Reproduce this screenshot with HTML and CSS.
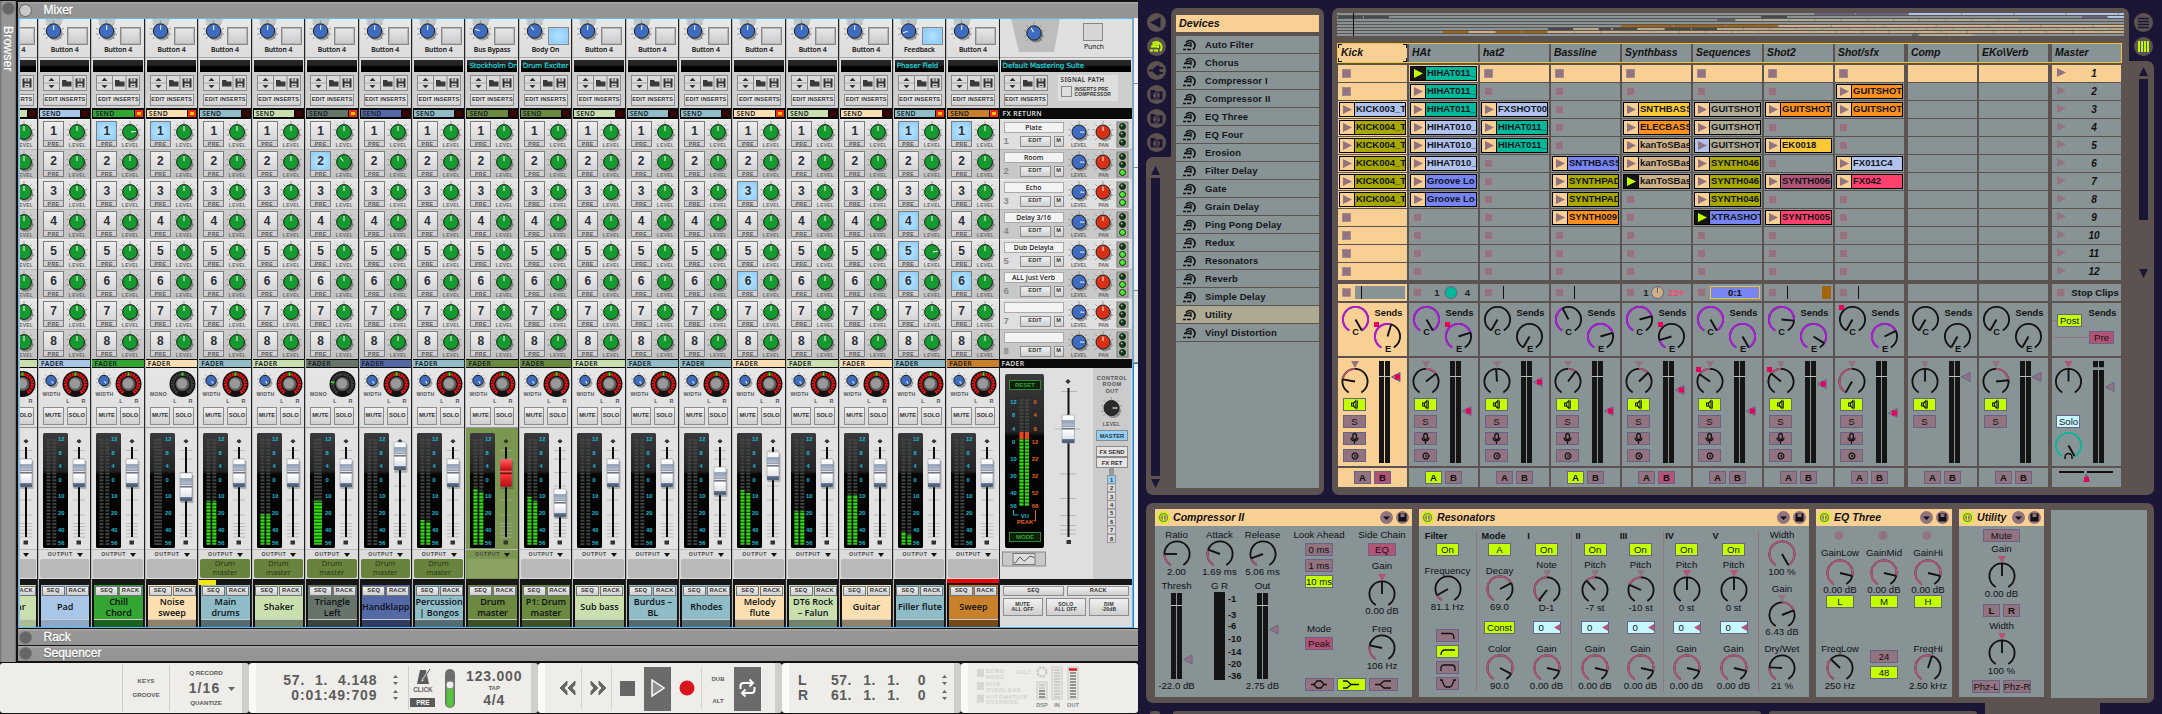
FILE: index.html
```html
<!DOCTYPE html>
<html lang="en">
<head>
<meta charset="utf-8">
<title>Mixer and session</title>
<link rel="stylesheet" href="styles.css">
</head>
<body>
<svg class="defs" width="0" height="0">
  <defs>
    <linearGradient id="cap" x1="0" y1="0" x2="0" y2="1">
      <stop offset="0" stop-color="#fff"/><stop offset=".18" stop-color="#f4f5f8"/><stop offset=".2" stop-color="#8f9db4"/><stop offset=".38" stop-color="#b5bdcc"/><stop offset=".4" stop-color="#7e8a9e"/><stop offset=".46" stop-color="#fff"/><stop offset=".49" stop-color="#3c4656"/><stop offset=".54" stop-color="#fff"/><stop offset=".84" stop-color="#dfe2e8"/><stop offset=".88" stop-color="#5d6e89"/><stop offset="1" stop-color="#44526a"/>
    </linearGradient>
    <linearGradient id="capred" x1="0" y1="0" x2="0" y2="1">
      <stop offset="0" stop-color="#f66"/><stop offset=".2" stop-color="#e33"/><stop offset=".4" stop-color="#b11"/><stop offset=".46" stop-color="#f77"/><stop offset=".5" stop-color="#300"/><stop offset=".56" stop-color="#f33"/><stop offset="1" stop-color="#a11"/>
    </linearGradient>
    <linearGradient id="glass" x1="0" y1="0" x2="0" y2="1">
      <stop offset="0" stop-color="#3a3a3c"/><stop offset=".33" stop-color="#232325"/><stop offset=".36" stop-color="#060606"/><stop offset="1" stop-color="#000"/>
    </linearGradient>
    <pattern id="led" width="10" height="3.36" patternUnits="userSpaceOnUse"><rect width="10" height="2.3" fill="#35dc12"/><rect y="2.3" width="10" height="1.1" fill="#0b5b05"/></pattern>
    <pattern id="off" width="10" height="3.36" patternUnits="userSpaceOnUse"><rect width="10" height="2" fill="#414640"/></pattern>
    <g id="ticks" stroke="#8b8b8b" stroke-width=".8"><path d="M0-11V-8M-7.7-7.7-6-6M7.7-7.7 6-6M-10.5-2.5-8-2M10.5-2.5 8-2M-10.5 3.5-8 2.8M10.5 3.5 8 2.8M-8 8-6 6M8 8 6 6"/></g>
    <g id="floppy"><path d="M0 0H9V9H0Z" fill="#333"/><path d="M2 0H7V3H2ZM2 5H7V9H2Z" fill="#d5d5d5"/><path d="M4.500 0V3M3 7H6" stroke="#333"/></g>
    <g id="device" fill="none" stroke="#111" stroke-width="1.600"><path d="M3 3.500A5 5 0 1 1 10 10.500"/><path d="M1 6.500H8M0 10.500H3M4 10.500H8" stroke-width="1.500"/><path d="M2 6.500Q4 3.500 8 4V8" stroke-width="1.300"/></g>
  </defs>
</svg>
<main class="desk">
  <section class="reason">
    <aside class="browser"><i class="dot"></i><span>Browser</span></aside>
    <div class="rack">
      <header class="bar top"><i class="dot light"></i>Mixer</header>
      <div class="mixrow"><div class="mixer" id="mixer"></div><div class="sliver"><i></i><i></i><i></i><i></i><b></b></div></div>
      <header class="bar"><i class="dot"></i>Rack</header>
      <header class="bar last"><i class="dot"></i>Sequencer</header>
    </div>
    <footer class="transport" id="transport"></footer>
  </section>
  <section class="live">
    <div class="upper">
      <nav class="tools" id="tools"></nav>
      <div class="panel devices"><h2>Devices</h2><ul id="devlist"></ul></div>
      <div class="panel session"><div id="overview"></div><div class="heads" id="heads"></div><div class="tracks" id="tracks"></div></div>
      <nav class="side" id="side"></nav>
    </div>
    <div class="panel chain" id="chain"></div>
    <div class="under"><i class="u0"></i><i class="u1"></i><i class="u2"></i><i class="u3"></i></div>
  </section>
</main>
<script src="app.js"></script>
</body>
</html>
```

FILE: styles.css
```css
* { box-sizing: border-box; }
body { margin: 0; width: 2162px; height: 714px; overflow: hidden; background: #1b1636; font-family: "Liberation Sans", Arial, sans-serif; }
svg { display: block; flex: none; overflow: visible; }
.defs { position: absolute; }
.desk { display: flex; width: 2162px; height: 714px; }

/* ---------- mixer ---------- */
.reason { width: 1138px; height: 714px; display: grid; grid-template-columns: 18px 1120px; grid-template-rows: 663px 51px; background: #111; overflow: hidden; }
.browser { width: 16px; height: 661px; margin-top: 1px; background: linear-gradient(90deg, #777 1px, #969696 2px, #969696 14px, #777); display: flex; flex-direction: column; align-items: center; gap: 11px; padding-top: 1px; }
.browser span { writing-mode: vertical-rl; color: #fff; font-size: 12.4px; line-height: 16px; text-shadow: 0 0 1px #555; -webkit-text-stroke: .3px #fff; }
.dot { display: block; flex: none; width: 13px; height: 13px; border-radius: 50%; background: #666; border: 1px solid #777; }
.dot.light { background: #c9c9c9; border-color: #666; }
.rack { height: 663px; }
.bar { height: 16px; margin-bottom: 1px; background: linear-gradient(#a9a9a9 1px, #969696 2px, #949494); color: #fff; font-size: 12px; line-height: 15px; display: flex; align-items: center; gap: 11px; padding-left: 1px; text-shadow: 0 1px 1px #555; -webkit-text-stroke: .3px #fff; }
.bar { gap: 11.500px; }
.bar.top { margin: 2px 0 0; height: 16px; }
.bar.last { margin: 0; height: 15px; }
.mixrow { display: flex; height: 611px; }
.mixer { width: 1115px; height: 610px; border: 1px solid #64b5ee; display: flex; background: #222; overflow: hidden; }
.sliver { width: 5px; height: 610px; background: #f2f2f5; display: flex; flex-direction: column; }
.sliver i { height: 84px; border-bottom: 1px solid #888; border-left: 1px solid #999; flex: 0 0 auto; }
.sliver i:nth-child(1) { height: 66px; }
.sliver i:nth-child(3) { height: 123px; }
.sliver i:nth-child(4) { height: 72px; background: #e2e2e2; }
.sliver b { flex: 1; border-left: 1px solid #2a82d8; border-top: 1px solid #2a82d8; }

.chan { width: 53.43px; flex: none; height: 608px; background: #e0e0e0; border-right: 1.5px solid #222; border-left: 1px solid #b8b8b8; display: flex; flex-direction: column; font-size: 6px; color: #333; overflow: hidden; }
.chan.cut { width: 19px; align-items: flex-end; }
.chan.cut > * { width: 51px; flex-shrink: 0; }
.insert { height: 39px; background: linear-gradient(#e8e8e8, #dcdcdc); border-bottom: 1px solid #aaa; }
.insert .r { display: flex; height: 26px; padding-left: 2px; gap: 1px; }
.sq { width: 21px; height: 18px; border: 1px solid #888; background: linear-gradient(#e8e8e8, #c9c9cc); margin: 8px 0 0 1px; box-shadow: inset 0 0 0 1px #b7b7b7; }
.sq.on { background: radial-gradient(#b4e3ff, #84c5f6); box-shadow: inset 0 0 0 1px #9ad2fa; }
.insert p { margin: 0; text-align: center; font: 500 6.8px/9px "Noto Sans", sans-serif; color: #111; -webkit-text-stroke: .15px #111; white-space: nowrap; }
.display { margin: 2px 1px 0; height: 12px; background: linear-gradient(#29292b, #222224 45%, #060606 50%, #000); color: #25d3d8; font: 7.1px/12px "DejaVu Sans", sans-serif; white-space: nowrap; overflow: hidden; padding-left: 2px; letter-spacing: -.1px; -webkit-text-stroke: .2px #25d3d8; }
.patch { height: 36px; background: linear-gradient(#cbcbcb, #d2d2d2); padding: 3px 0 0 4px; }
.patch .g { display: flex; }
.g { display: flex; height: 16px; width: 44px; border: 1px solid #8a8a8a; background: #dadada; }
.edit { width: 44px; height: 12px; margin-top: 3px; }
.btn { border: 1px solid #8d8d8d; background: linear-gradient(#f1f1f1, #cfcfcf); color: #333; font: 700 5.6px/1 "Liberation Sans", sans-serif; display: flex; align-items: center; justify-content: center; text-align: center; letter-spacing: .2px; white-space: nowrap; }
.btn.on { background: #8fd0fb; }
.band { height: 11px; background: #0a0a0a; display: flex; align-items: center; padding: 1px 1px; }
.band span { flex: 1; height: 7.5px; font: 600 6.8px/7.5px "Noto Sans", sans-serif; color: #15202a; padding-left: 2px; letter-spacing: .3px; }
.band i { width: 8px; height: 7px; background: #3c0505; margin-left: 1px; border: 1px solid #260202; }
.band i.lit { background: #ffc400; border: 2px solid #f22e10; }
.band.f { height: 9px; padding: 0; }
.band.f span { height: 7px; line-height: 7px; }
.sends { height: 240px; display: flex; flex-direction: column; }
.send { flex: 1; background: linear-gradient(#e6e6e6, #d9d9d9); display: flex; border-top: 1px solid #f2f2f2; padding-left: 3px; }
.send:nth-child(even) { background: linear-gradient(#cdcdcd, #c2c2c2); border-top-color: #b5b5b5; }
.num { width: 21px; height: 26px; margin: 1px 3px 0 1px; border: 1px solid #7d7d7d; background: linear-gradient(#efefef, #cdcdd1); display: flex; flex-direction: column; text-align: center; }
.num b { font: 700 12px/18px "Liberation Sans", sans-serif; color: #2c2f33; height: 18px; }
.num.on b { background: radial-gradient(#bfe7ff, #8acbf9); }
.num small { font: 700 5.2px/6px "Liberation Sans", sans-serif; border-top: 1px solid #909090; color: #555; letter-spacing: .4px; }
.pan { height: 60px; display: flex; flex-direction: column; background: linear-gradient(#e6e6e6, #dedede); border-bottom: 1px solid #999; }
.ms { display: flex; gap: 3px; padding: 1px 0 0 4px; }
.ms .btn { width: 20.5px; height: 18px; font-size: 5.8px; letter-spacing: 0; }
.strip { height: 122px; border-bottom: 1px solid #bbb; background: #e2e2e2; padding-top: 1px; }
.bus .strip, .bus .out { background: #7b9650; }
.out { height: 29px; background: #dcdcdc; padding: 0 1px; }
.out p { margin: 0; height: 9px; display: flex; align-items: center; justify-content: center; gap: 4px; font: 700 5.2px/9px "Liberation Sans", sans-serif; letter-spacing: .6px; color: #444; padding-left: 1px; }
.out div { height: 19px; border-radius: 2px; background: #b9b9b9; text-align: center; font: 7.6px/9px "Open Sans", sans-serif; color: #27340f; white-space: pre; }
.bus .out div { background: #8ba362; }
.out div.to { background: #68833e; }
.flag { height: 6px; flex: none; background: #161616; border-top: 2px solid #161616; }
.flag.y { background: linear-gradient(90deg, #f7e70f 17px, #161616 17px); border-top-width: 1px; }
.flag.r { height: 6px; background: #e60303; border-color: #e60303; border-bottom: 2px solid #161616; }
.name { flex: 1; display: flex; flex-direction: column; border-left: 2px solid #111; border-right: 1px solid #111; color: #0b1013; }
.name .sr { display: flex; justify-content: center; gap: 1px; padding-top: 1px; }
.name .btn { width: 23px; height: 10px; border-color: #6f7578; font-size: 5.8px; }
.name p { margin: 0; height: 23px; display: flex; align-items: center; justify-content: center; text-align: center; font: 600 9px/10.5px "Open Sans", sans-serif; white-space: pre; }
.name i { flex: 1; border-top: 1.5px solid #c9cdcd; background: rgba(0, 0, 0, .42); }
.chan.first .name i, .chan.cut .name i { background: rgba(0, 0, 0, .15); }

.master { flex: 1; display: flex; flex-direction: column; background: #e0e0e0; color: #333; }
.minsert { height: 39px; background: #e0e0e0; border-bottom: 1px solid #aaa; }
.mpatch { height: 36px; display: flex; background: #cecece; padding: 3px 0 0 4px; gap: 10px; }
.sig { width: 60px; height: 26px; background: #dedede; font: 600 6.2px/8px "Noto Sans", sans-serif; padding: 1px 3px; letter-spacing: .4px; white-space: nowrap; }
.sig div { display: flex; gap: 3px; font: 700 4.9px/5px "Liberation Sans", sans-serif; margin-top: 3px; letter-spacing: .1px; }
.sig i { width: 11px; height: 11px; border: 1px solid #888; margin-top: -1px; flex: none; }
.fx { flex: 1; display: flex; background: #dfdfdf; border-top: 1px solid #eee; padding-left: 4px; }
.fx:nth-child(even) { background: #c8c8c8; border-top-color: #b5b5b5; }
.fxn { width: 60px; margin-top: 2px; }
.fxn p { margin: 0; height: 11px; border: 1px solid #aaa; background: #f3f3f3; text-align: center; font: 500 6.9px/9px "Noto Sans", sans-serif; color: #111; }
.fxn div { display: flex; gap: 3px; align-items: center; margin-top: 2px; }
.fxn b { width: 13px; font: 700 9.5px/12px "Liberation Sans", sans-serif; color: #888; }
.fxn .e { width: 31px; height: 11px; }
.fxn .m { width: 10px; height: 11px; }
.desktrack { background: #dfdfdf; padding-top: 1px; }
.mbot { flex: 1; background: #dcdcdc; padding: 1px 3px; }
.mbot div { display: flex; gap: 3px; margin-bottom: 2px; }
.mbot .btn { flex: 1; height: 10px; line-height: 5.2px; white-space: pre; }
.mbot .big .btn { height: 18px; font-size: 5px; }

/* ---------- transport ---------- */
.transport { grid-column: 1 / 3; height: 51px; background: #111; display: flex; color: #5c5c5c; }
.tp { background: #eeede9; height: 50px; display: flex; align-items: center; border-radius: 3px; border-right: 7px solid #cfcfcc; border-left: 7px solid #fafaf8; flex: none; }
.tp.t1 { width: 249px; border-left: 0; padding-left: 122px; }
.tp.t2 { width: 289px; }
.tp.t3 { width: 244px; }
.tp.t4 { width: 179px; }
.tp.t5 { width: 177px; border-right: 0; }
.cell { display: flex; flex-direction: column; align-items: center; justify-content: space-evenly; height: 46px; font: 700 6.2px/8px "Liberation Sans", sans-serif; border-left: 1px solid #ccc; flex: none; }
.cell.k { width: 47px; padding: 5px 0; }
.cell.q { width: 73px; border-right: 0; }
.cell.q b, .tempo b { font: 700 14px/15px "Liberation Sans", sans-serif; letter-spacing: .8px; white-space: nowrap; }
.cell.q b { letter-spacing: 1.1px; padding-left: 12px; }
.pos { width: 104px; height: 30px; text-align: right; font: 700 14px/15px "Liberation Sans", sans-serif; white-space: pre; margin-left: 17px; letter-spacing: .9px; display: flex; flex-direction: column; align-items: flex-end; }
.pos span { margin-right: -1px; }
.arr { margin-left: 15px; }
.click { display: flex; flex-direction: column; align-items: center; font: 700 6.4px/8px "Liberation Sans", sans-serif; width: 30px; margin-left: 9px; height: 44px; border-left: 1px solid #ccc; }
.click b { background: #5a5a5a; color: #fff; width: 25px; text-align: center; margin-top: 4px; line-height: 9px; }
.tempo { width: 74px; display: flex; flex-direction: column; align-items: center; font: 700 6px/9px "Liberation Sans", sans-serif; }
.loc { display: grid; grid-template-columns: 26px 28px 24px 24px 26px; text-align: right; font: 700 14px/15px "Liberation Sans", sans-serif; margin-left: 9px; letter-spacing: .5px; }
.loc span:nth-child(5n + 1) { text-align: left; }

/* ---------- session ---------- */
.live { width: 1024px; height: 714px; color: #111; }
.panel { background: #5c5350; border-radius: 7px; }
.upper { display: flex; height: 495px; padding-top: 8px; padding-left: 8px; }
.tools { width: 25px; height: 487px; display: flex; flex-direction: column; flex: none; }
.circles { height: 149px; padding: 5px 0 0 1px; display: flex; flex-direction: column; gap: 5px; background: #1b1636; }
.scroll { flex: 1; background: #5c5350; border-radius: 7px 0 0 7px; padding: 9px 0 7px 4px; display: flex; flex-direction: column; align-items: center; padding-right: 10px; gap: 3px; }
.scroll i { width: 9px; flex: 1; background: #1b1636; }
.devices { width: 153px; padding: 7px 5px 7px 5px; height: 487px; flex: none; border-bottom-left-radius: 0; }
.devices h2 { margin: 0 0 4px; height: 17px; background: #f9d093; font: italic 700 10.8px/16px "Liberation Sans", sans-serif; padding-left: 3px; }
.devices ul { margin: 0; padding: 0; list-style: none; background: #879394; height: 452px; }
.devices li { height: 18px; border-bottom: 1px solid #5c5350; display: flex; align-items: center; gap: 8px; padding-left: 7px; font: 700 9.5px/17px "Liberation Sans", sans-serif; letter-spacing: .12px; color: #15151c; }
.devices li.sel { background: #aea993; }
.session { width: 797px; height: 487px; margin-left: 8px; padding: 5px 5px 0; flex: none; border-bottom-right-radius: 0; }
.heads { margin-top: 7px; width: 785px; height: 20px; border: 1px solid #fbc52f; display: flex; background: #5c5350; }
.heads span { width: 69px; margin-right: 2px; background: #879394; font: italic 700 10.4px/17px "Liberation Sans", sans-serif; padding-left: 3px; flex: none; }
.heads span.g, .col.g { margin-right: 4px; }
.heads .sel { background: linear-gradient(90deg, #111 4px, transparent 4px 65px, #111 65px) 0 0/69px 1px no-repeat, linear-gradient(90deg, #111 4px, transparent 4px 65px, #111 65px) 0 100%/69px 1px no-repeat, linear-gradient(#111 4px, transparent 4px 14px, #111 14px) 0 0/1px 18px no-repeat, linear-gradient(#111 4px, transparent 4px 14px, #111 14px) 100% 0/1px 18px no-repeat, #f9d093; }
.heads span:last-child { margin-right: 0; }
.tracks { display: flex; margin: 2px 0 0 1px; }
.col { width: 69px; margin-right: 2px; flex: none; }
.slot { height: 17px; margin-bottom: 1px; background: #879394; padding: 1px; display: flex; }
.slot.lit, .col.sel > div { background-color: #f9d093; }
.stop { width: 9px; height: 9px; background: #927380; margin: 3px 0 0 3px; border: .5px solid #a08a90; flex: none; }
.clip { flex: 1; min-width: 0; border: 1px solid #000; display: flex; height: 15px; margin: 0; }
.clip u { width: 15px; background: #f9d093; border-right: 1px solid #000; flex: none; padding: 2px 0 0 3px; }
.clip.play u { background: #151515; }
.clip.alt u { background: #b1c3ec; }
.clip span { flex: 1; overflow: hidden; white-space: nowrap; font: 700 9.5px/12px "Liberation Sans", sans-serif; padding-left: 1px; color: #10151c; }
.c-teal { background: #00b99b; }
.c-sky { background: #b1c3ec; }
.c-olive { background: #a8a800; }
.c-blue { background: #7784f2; }
.c-orange { background: #ff8f1f; }
.c-yellow { background: #fcc835; }
.c-tan { background: #cfb086; }
.c-gray { background: #b0ab95; }
.c-plum { background: #b35476; }
.c-red { background: #ff416d; }
.scene { padding: 3px 0 0 5px; font: italic 700 10px/11px "Liberation Sans", sans-serif; }
.scene span { width: 56px; text-align: center; }
.status { height: 17px; margin: 4px 0 2px; background: #879394; padding: 1px; display: flex; font: 700 9.6px/15px "Liberation Sans", sans-serif; }
.sendbox { height: 53px; margin-bottom: 2px; background: #879394; }
.mix { height: 108px; margin-bottom: 2px; background: #879394; display: flex; }
.mix .l { width: 33px; padding-left: 5px; display: flex; flex-direction: column; gap: 4px; }
.pb { border: 1px solid #6a6186; background: #927380; color: #111; font: 9.6px/11px "Liberation Sans", sans-serif; display: flex; align-items: center; justify-content: center; white-space: nowrap; flex: none; }
.pb.lime { background: #c4ff00; }
.pb.p { background: #b35476; }
.pb.w { background: #c6f8ff; justify-content: space-between; padding-left: 5px; }
.mix .pb { width: 23px; height: 13px; }
.ab { height: 19px; background: #879394; display: flex; gap: 3px; padding: 3px 0 0 16px; }
.ab.x { padding: 0; }
.ab .pb { width: 17px; height: 13px; font-weight: 700; }
.side { width: 25px; display: flex; flex-direction: column; flex: none; }
.side .two { height: 53px; padding: 5px 0 0 5px; display: flex; flex-direction: column; gap: 5px; }
.side .sc { flex: 1; background: #5c5350; border-radius: 0 7px 7px 0; display: flex; flex-direction: column; padding: 6px 0 0 10px; gap: 3px; align-items: flex-start; }
.side .sc i { width: 9px; height: 141px; background: #1b1636; }
.side .sc svg + i + svg { margin-top: 46px; }

/* ---------- device chain ---------- */
.chain { margin: 8px 0 0 8px; width: 1008px; height: 200px; padding: 6px 0 0 9px; display: flex; gap: 7px; }
.dev { height: 188px; background: #879394; flex: none; }
.dev header { height: 17px; background: #f9d093; display: flex; align-items: center; gap: 3px; padding: 0 3px 0 2px; font: italic 700 10.6px/17px "Liberation Sans", sans-serif; }
.dev header span { flex: 1; white-space: nowrap; }
.dev .body { display: flex; }
.w1 { width: 257px; }
.w2 { width: 390px; }
.w3 { width: 136px; }
.w4 { width: 85px; }
.w3 .body { padding-left: 2px; }
.blank { width: 96px; height: 188px; margin-top: 1px; background: #879394; }
.stack { display: flex; flex-direction: column; align-items: center; flex: none; }
.stack > * { flex: none; }
.rule { width: 1px; height: 161px; margin-top: 5px; background: #927380; flex: none; }
.t { font: 9.7px/12px "Liberation Sans", sans-serif; height: 12px; white-space: nowrap; color: #10121a; display: flex; justify-content: center; width: 0; }
.t.b { font-weight: 700; font-size: 9.2px; }
.pair { display: flex; gap: 3px; }
.under { height: 11px; display: grid; grid-template-columns: 27px 588px 8px 208px 8px 115px; padding-left: 8px; }
.under i { background: #5c5350; height: 3px; margin-top: 8px; border-radius: 5px 5px 0 0; }
.under .u0 { width: 10px; margin-left: 4px; }
.under .u1 { grid-column: 2; }
.under .u2 { grid-column: 4; }
.under .u3 { grid-column: 6; margin-top: 0; height: 11px; border-radius: 0; }
```

FILE: app.js
```js
const $ = id => document.getElementById(id);
const svg = (w, h, s) => `<svg width="${w}" height="${h}" viewBox="0 0 ${w} ${h}">${s}</svg>`;
const txt = (x, y, s, size, fill = '#333', extra = '') => `<text x="${x}" y="${y}" font-size="${size}" fill="${fill}" text-anchor="middle" font-family="Liberation Sans, sans-serif" ${extra}>${s}</text>`;
const bold = 'font-weight="700"';

/* ---------- mixer ---------- */
const dial = (x, y, r, fill, a, tick = 1) => `<g transform="translate(${x} ${y})"><use href="#ticks" transform="scale(${tick})"/><circle cx="1.8" cy="2.4" r="${r}" fill="#000" opacity=".3"/><circle r="${r}" fill="${fill}" stroke="#1a1f1a" stroke-width="1"/><path d="M0-1V${-r + 1.5}" transform="rotate(${a})" stroke="#e8f5e8" stroke-width="1.1"/></g>`;

const BLUE = '#3f6cc0', GREEN = '#159a2f', RED = '#d92f17';
const sand = '#fbdfb0', teal = '#8fbcc6', lime = '#c9e0ae', moss = '#6b8a40';
const channels = [
  { n: 'Guitar', col: lime, cut: 1 },
  { n: 'Pad', col: '#a9c6e8', first: 1 },
  { n: 'Chill\nChord', col: '#33a532', on: [1], lv: { 1: 85 } },
  { n: 'Noise\nsweep', col: sand, on: [1], mono: 1, f: 472 },
  { n: 'Main\ndrums', col: teal, m: [500, 500], out: 1, flag: 'y' },
  { n: 'Shaker', col: lime, m: [513, 513], out: 1 },
  { n: 'Triangle\nLeft', col: '#66746a', on: [2], lv: { 2: -40 }, mono: 1, p: -80, m: [500, 500], out: 1 },
  { n: 'Handklapp', col: '#5568a6', f: 441, out: 1 },
  { n: 'Percussion\n| Bongos', col: teal, m: [519, 521], out: 1 },
  { n: 'Drum\nmaster', col: moss, lab: 'Bus Bypass', disp: 'Stockholm Dru', k: -72, m: [488, 491], bus: 1 },
  { n: 'P1: Drum\nmaster', col: moss, lab: 'Body On', disp: 'Drum Exciter', k: -38, btn: 1, m: [496, 500], f: 488 },
  { n: 'Sub bass', col: lime },
  { n: 'Burdus –\nBL', col: teal },
  { n: 'Rhodes', col: teal, f: 466 },
  { n: 'Melody\nflute', col: sand, on: [3, 6], m: [489, 492], f: 451 },
  { n: 'DT6 Rock\n– Falun', col: lime, m: [510, 510] },
  { n: 'Guitar', col: sand, m: [494, 494] },
  { n: 'Filler flute', col: teal, lab: 'Feedback', disp: 'Phaser Field', k: -108, btn: 1, on: [1, 4, 5, 6], lv: { 5: 82 }, m: [531, 534] },
  { n: 'Sweep', col: '#c9802a', on: [1, 6], flag: 'r' }
];

const panDial = c => {
  let s = '<circle r="13" fill="#121212"/>';
  for (let a = -144; a <= 144; a += 16) {
    const mid = a === 0 ? !c.mono || !c.p : false;
    const green = mid || (c.mono && c.p && a === -80);
    const col = green ? '#38e12a' : c.mono ? '#3c3c3c' : '#e21212';
    s += `<rect x="-1.1" y="-11.6" width="2.2" height="3.4" fill="${col}" transform="rotate(${a})"/>`;
  }
  return `<g transform="translate(36.5 16)">${s}<circle r="7" fill="#5a5a5a"/><circle r="5.2" cx="-.5" cy="-.5" fill="#999"/></g>`;
};
const meterLabels = [['12', 438], ['8', 451.5], ['4', 465], ['0', 478.5], ['10', 495], ['20', 512], ['40', 529], ['56', 542]];
const faderStrip = c => {
  const o = 428, f = (c.f || 458) - o;
  let s = `<rect x="4" y="4" width="25" height="115" rx="1.5" fill="url(#glass)"/>`;
  const bars = c.mono ? [[8, 8]] : [[7.5, 4], [13.3, 4]];
  bars.forEach(([x, w], i) => {
    s += `<rect x="${x}" y="9" width="${w}" height="107" fill="url(#off)"/>`;
    if (c.m) s += `<rect x="${x}" y="${c.m[i] - o}" width="${w}" height="${543.5 - c.m[i]}" fill="url(#led)"/>`;
  });
  meterLabels.forEach(([t, y]) => s += txt(t.length > 1 ? 22.2 : 21, y - o + 2.2, t, 5.8, '#1fbcd2', bold));
  s += '<path d="M34 21.5H46M34 30H46M34 43.5H47M34 57H46M34 71H46M34 86H46M34 94.500H46M34 97.500H46M34 101H46M34 104.500H46M34 108H46" stroke="#aaa" stroke-width=".7"/>';
  s += '<path d="M40 18V108" stroke="#0c0c0c" stroke-width="2"/><path d="M40 10l2.600 2.300-2.600 2.300-2.600-2.300zM37.500 111.500h4.500v4h-4.500z" fill="#333"/>';
  s += `<rect x="34.500" y="${f + 2}" width="13" height="28" fill="#000" opacity=".22"/><rect x="34" y="${f}" width="12" height="28" rx=".8" fill="url(#${c.bus ? 'capred' : 'cap'})" stroke="#7e8694" stroke-width=".5"/>`;
  return svg(51, 120, s);
};
const patchBtns = () => `<div class="g">${svg(42, 14, '<path d="M4.500 5h6l-3-3.200zM4.500 9h6l-3 3.200z" fill="#333"/><path d="M0 7H15" stroke="#999" stroke-width=".8"/><path d="M15.500 0V14M29 0V14" stroke="#888"/><path d="M18 4h4l1 1.500h4.500V10.500H18z" fill="#3a3a3a"/><use href="#floppy" x="31.500" y="2.500"/>')}</div>`;
const sendRow = (c, i) => `<div class="send"><div class="num${(c.on || []).includes(i) ? ' on' : ''}"><b>${i}</b><small>PRE</small></div>${svg(22, 29, dial(10, 12, 7.4, GREEN, (c.lv || {})[i] || 0) + txt(10.5, 27.300, 'LEVEL', 4.900, '#666', bold + ' letter-spacing=".3"'))}</div>`;

const channel = c => `<div class="chan${c.cut ? ' cut' : ''}${c.first ? ' first' : ''}${c.bus ? ' bus' : ''}">
<div class="insert"><div class="r">${svg(24, 26, '<path d="M4 0H22L18 9H8z" fill="#c4c4c4"/>' + dial(12.500, 12, 7.2, BLUE, c.k || 3))}<div class="sq${c.btn ? ' on' : ''}"></div></div><p>${c.lab || 'Button 4'}</p></div>
<div class="display">${c.disp || ''}</div>
<div class="patch">${patchBtns()}<div class="btn edit">EDIT INSERTS</div></div>
<div class="band"><span style="background:${c.col}">SEND</span><i class="${c.on ? 'lit' : ''}"></i></div>
<div class="sends">${[1, 2, 3, 4, 5, 6, 7, 8].map(i => sendRow(c, i)).join('')}</div>
<div class="band f"><span style="background:${c.col}">FADER</span></div>
<div class="pan">${svg(51, 38, (c.mono ? '' : dial(12, 12.500, 5.2, BLUE, 145, .75)) + panDial(c) + txt(12.500, 27.500, c.mono ? 'MONO' : 'WIDTH', 5.1, '#555', bold + ' letter-spacing=".3"') + txt(29, 34.500, 'L', 5.5, '#555', bold) + txt(44.500, 34.500, 'R', 5.5, '#555', bold))}<div class="ms"><div class="btn">MUTE</div><div class="btn">SOLO</div></div></div>
<div class="strip">${faderStrip(c)}</div>
<div class="out"><p>OUTPUT ${svg(6, 4, '<path d="M0 0H6L3 4z" fill="#111"/>')}</p><div class="${c.out ? 'to' : ''}">${c.out ? 'Drum\nmaster' : ''}</div></div>
<div class="flag ${c.flag || ''}"></div>
<div class="name" style="background:${c.col}"><div class="sr"><div class="btn">SEQ</div><div class="btn">RACK</div></div><p>${c.n}</p><i></i></div>
</div>`;

const fxNames = [['Plate', 0], ['Room', 1], ['Echo', 2], ['Delay 3/16', 1], ['Dub Delayla', 2], ['ALL Just Verb', 2], ['', 0], ['', 0]];
const fxRow = ([n, lit], i) => {
  let s = dial(15, 12, 7, BLUE, 92) + dial(39, 12, 7, RED, 0) + txt(15, 27, 'LEVEL', 4.900, '#666', bold) + txt(39.500, 27, 'PAN', 4.900, '#666', bold);
  s += '<rect x="53" y="2" width="11" height="25" fill="#a9aea4" stroke="#777"/>';
  for (let k = 0; k < 3; k++) s += `<circle cx="58.500" cy="${6.500 + k * 8}" r="3" fill="${k >= 3 - lit ? '#42ee21' : '#14351b'}" stroke="#10240f"/><circle cx="57.700" cy="${5.500 + k * 8}" r="1" fill="#9fc79a"/>`;
  return `<div class="fx"><div class="fxn"><p>${n}</p><div><b>${i + 1}</b><span class="btn e">EDIT</span><span class="btn m">M</span></div></div>${svg(66, 29, s)}</div>`;
};
const masterFader = () => {
  let s = '<rect x="93" y="-1" width="38" height="211" fill="#cbcbcb"/><rect x="5" y="5" width="39" height="174" rx="2" fill="url(#glass)"/>';
  s += '<rect x="9.500" y="11.500" width="31" height="9" fill="#0a1e08" stroke="#2f8a2f"/><rect x="9.500" y="163.500" width="31" height="9" fill="#0a1e08" stroke="#2f8a2f"/>';
  s += txt(25, 18.300, 'RESET', 6, '#35a636', bold) + txt(25, 170.300, 'MODE', 6, '#35a636', bold);
  [19.5, 25].forEach(x => s += `<rect x="${x}" y="30" width="4" height="107" fill="url(#off)"/><rect x="${x}" y="63" width="4" height="7" fill="#ee4322"/><rect x="${x}" y="70" width="4" height="67" fill="url(#led)"/>`);
  const r = ['0', '4', '8', '12', '22', '32', '52', '68'];
  meterLabels.forEach(([t, y], i) => { const yy = y - 438 + 34.5; s += txt(13.500, yy, t, 5.8, '#1fbcd2', bold) + txt(35, yy, r[i], 5.8, '#e2641c', bold); });
  s += '<path d="M13.500 141v5h5" stroke="#1fbcd2" fill="none"/><path d="M35.500 141v11h-2" stroke="#e2641c" fill="none"/>' + txt(25, 148.500, 'VU', 6, '#1fbcd2', bold) + txt(25, 154.500, 'PEAK', 6, '#e2641c', bold);
  s += '<path d="M61 22.500H77M55 60H80M60 105H76M60 129.500H76M60 146.500H76M60 156.500H76M60 161H76M60 165H76" stroke="#aaa" stroke-width=".8"/><path d="M68.500 19V168" stroke="#111" stroke-width="2"/><path d="M68 10l2.600 2.500-2.600 2.500-2.600-2.500zM66.500 171h4.500v4h-4.500z" fill="#333"/><rect x="62" y="46" width="12.500" height="28" rx=".8" fill="url(#cap)" stroke="#7e8694" stroke-width=".5"/>';
  s += '<rect x="2.500" y="183" width="43" height="14" fill="#c9c9c9" stroke="#888"/><rect x="13" y="184.500" width="22" height="11" fill="#ddd" stroke="#777"/><path d="M14 194c4 0 4-8 7-5s3 4 5 2 4-6 8-2" stroke="#444" fill="none"/>';
  ['CONTROL', 'ROOM', 'OUT'].forEach((t, i) => s += txt(112, 10.500 + i * 6.700, t, 5.600, '#555', bold + ' letter-spacing=".4"'));
  s += dial(111.500, 39, 7.500, '#2b2b2b', 90) + txt(111.500, 56.500, 'LEVEL', 5, '#555', bold + ' letter-spacing=".3"');
  [['MASTER', 61, '#8fd0fb'], ['FX SEND', 77, '#e4e4e4'], ['FX RET', 88, '#e4e4e4']].forEach(([t, y, f]) => s += `<rect x="96.500" y="${y + .5}" width="31" height="10" fill="${f}" stroke="#8a8a8a"/>` + txt(112, y + 7.700, t, 5.800, '#333', bold));
  s += '<path d="M111.500 99V106" stroke="#999" stroke-width="5"/>';
  for (let i = 0; i < 8; i++) s += `<rect x="107.500" y="${106.500 + i * 8.400}" width="8" height="8" fill="${i ? '#dcdcdc' : '#8fd0fb'}" stroke="#888" stroke-width=".8"/>` + txt(111.500, 112.700 + i * 8.400, i + 1, 5.800, '#333', bold);
  return `<div class="desktrack">${svg(131, 210, s)}</div>`;
};
const master = `<div class="master">
<div class="minsert">${svg(131, 38, '<path d="M11 0H60L54 33H19z" fill="#bdbdbd"/>' + dial(34, 14, 7.2, BLUE, -30) + '<rect x="83.500" y="4.500" width="19" height="17" fill="#d6d6d9" stroke="#888"/><text x="94" y="29.500" font-size="6.800" text-anchor="middle" font-family="Noto Sans" fill="#111">Punch</text>')}</div>
<div class="display">Default Mastering Suite</div>
<div class="mpatch"><div>${patchBtns()}<div class="btn edit">EDIT INSERTS</div></div><div class="sig">SIGNAL PATH<div><i></i><span>INSERTS PRE<br>COMPRESSOR</span></div></div></div>
<div class="band"><span style="color:#ddd">FX RETURN</span></div>
<div class="sends">${fxNames.map(fxRow).join('')}</div>
<div class="band f"><span style="color:#ddd">FADER</span></div>
${masterFader()}
<div class="flag"></div>
<div class="mbot"><div><span class="btn">SEQ</span><span class="btn">RACK</span></div><div class="big"><span class="btn">MUTE\nALL OFF</span><span class="btn">SOLO\nALL OFF</span><span class="btn">DIM\n-20dB</span></div></div>
</div>`;
$('mixer').innerHTML = channels.map(channel).join('') + master;

/* ---------- transport ---------- */
const arrows = `<svg class="arr" width="7" height="28" viewBox="0 0 7 28"><path d="M1 4h5L3.500 1zM1 8h5l-2.500 3zM1 19h5l-2.500-3zM1 23h5l-2.500 3z" fill="#666"/></svg>`;
let panelMeters = '';
[['DEMO', 'MODE', 0], ['DISK', 'OVERLOAD', 13], ['AUTOMATION', 'OVERRIDE', 25.500]].forEach(([a, b, y]) => {
  panelMeters += `<rect x="9" y="${4 + y}" width="7" height="8" fill="#d6d6d3"/><text x="18" y="${8 + y}" font-size="5.500" font-weight="700" fill="#d3d3d0" letter-spacing=".5">${a}</text><text x="18" y="${13.500 + y}" font-size="5.500" font-weight="700" fill="#d3d3d0" letter-spacing=".5">${b}</text>`;
});
const bar = (x, y, h, dark) => {
  let s = `<rect x="${x}" y="${y}" width="10" height="${h}" fill="#e6e6e3" stroke="#c9c9c6"/>`;
  for (let k = y + 3; k < y + h - 1; k += 3) s += `<path d="M${x + 2} ${k}h6" stroke="${k > dark ? '#777' : '#c6c6c3'}" stroke-width="1.500"/>`;
  return s;
};
panelMeters += '<text x="48" y="9" font-size="5.500" font-weight="700" fill="#d3d3d0">CALC</text><circle cx="74" cy="7" r="4.500" fill="none" stroke="#c9c9c6" stroke-width="2.500" stroke-dasharray="2.500 1"/>' + bar(69, 17, 17, 24) + bar(84, 2, 32, 99) + bar(100, 2, 32, 6) + '<path d="M101 4.500h8" stroke="#e0181f" stroke-width="2.500"/>' + txt(74, 42, 'DSP', 5.600, '#888', bold) + txt(89, 42, 'IN', 5.600, '#888', bold) + txt(105, 42, 'OUT', 5.600, '#888', bold);

const transportKeys = `<g transform="translate(5 0)"><path d="M17 18l-7 7 7 7v-3.500l-3-3.500 3-3.500zM25 18l-7 7 7 7v-3.500l-3-3.500 3-3.500z" fill="#666" stroke="#666"/>
<path d="M41 18l7 7-7 7v-3.500l3-3.500-3-3.500zM49 18l7 7-7 7v-3.500l3-3.500-3-3.500z" fill="#666" stroke="#666"/>
<rect x="70" y="18" width="15" height="15" fill="#666"/><path d="M31.500 4V46M61.500 4V46M151.500 4V46" stroke="#d2d2cf"/>
<rect x="94" y="4" width="27" height="44" fill="#6b6b6b"/><path d="M102 17l12 8-12 8z" fill="#8f8f8f" stroke="#fff" stroke-width="1.500"/>
<circle cx="137" cy="25" r="7.500" fill="#d9151f"/>${txt(168, 18, 'DUB', 6, '#5c5c5c', bold)}${txt(168, 40, 'ALT', 6, '#5c5c5c', bold)}
<rect x="184" y="4" width="27" height="44" fill="#6b6b6b"/><path d="M190.500 26v-3q0-3 3-3h9M199.500 16.500l3.500 3.500-3.500 3.500M204.500 24v3q0 3-3 3h-9M195.500 26.500l-3.500 3.500 3.500 3.500" fill="none" stroke="#fff" stroke-width="2"/></g>`;
$('transport').innerHTML = `<div class="tp t1"><div class="cell k"><span>KEYS</span><span>GROOVE</span></div><div class="cell q"><span>Q RECORD</span><b>1/16 ${'<svg style="display:inline-block" width="10" height="10"><path d="M3 4h7l-3.500 4z" fill="#666"/></svg>'}</b><span>QUANTIZE</span></div></div>
<div class="tp t2"><div class="pos"><span>57.  1.  4.148</span><span>0:01:49:709</span></div>${arrows}<div class="click">${svg(16, 20, '<path d="M5 4h6l3 14H2z" fill="#5a5a5a"/><path d="M7 15L14 4" stroke="#eee" stroke-width="1.500"/><path d="M8 14L15 3" stroke="#5a5a5a"/>')}CLICK<b>PRE</b></div>
${svg(20, 46, '<rect x="8" y="4" width="10" height="39" rx="5" fill="#6d6d6d"/><rect x="9.500" y="20" width="7" height="22" rx="3" fill="#57c23d"/><circle cx="13" cy="20" r="4" fill="#eee" stroke="#888"/>')}<div class="tempo"><b>123.000</b><span>TAP</span><b>4/4</b></div></div>
<div class="tp t3">${svg(230, 50, transportKeys)}</div>
<div class="tp t4"><div class="loc"><span>L</span><span>57.</span><span>1.</span><span>1.</span><span>0</span><span>R</span><span>61.</span><span>1.</span><span>1.</span><span>0</span></div>${arrows}</div>
<div class="tp t5">${svg(150, 46, panelMeters)}</div>`;

/* ---------- session ---------- */
const polar = (cx, cy, r, a) => [cx + r * Math.sin(a * Math.PI / 180), cy - r * Math.cos(a * Math.PI / 180)];
const arc = (cx, cy, r, a, b, col) => {
  if (Math.abs(b - a) < 1) return '';
  const [x0, y0] = polar(cx, cy, r, a), [x1, y1] = polar(cx, cy, r, b);
  return `<path d="M${x0.toFixed(2)} ${y0.toFixed(2)}A${r} ${r} 0 ${b - a > 180 ? 1 : 0} 1 ${x1.toFixed(2)} ${y1.toFixed(2)}" fill="none" stroke="${col}" stroke-width="1.800"/>`;
};
const PINK = '#b35476', VIOLET = '#b41ae6', DIM = '#927380';
const lknob = (cx, cy, v, col, bi) => {
  const r = 12.6, [px, py] = polar(cx, cy, 12.6, v);
  return arc(cx, cy, r, -150, 150, '#111') + (bi ? arc(cx, cy, r, Math.min(0, v), Math.max(0, v), col) : arc(cx, cy, r, -150, v, col)) + `<path d="M${cx} ${cy}L${px} ${py}" stroke="#111" stroke-width="1.900"/>`;
};
const tri = (x, y, col = DIM) => `<path d="M${x - 4} ${y}h8l-4 7z" fill="${col}"/>`;
const mark = (x, y) => `<rect x="${x}" y="${y}" width="5" height="5" fill="#e6005c"/>`;
const tracks = [
  { n: 'Kick', sel: 1, c: 150, e: 17, me: 1, p: -80, f: 377, b: 1, clips: { 3: 'sky KICK003_T', 4: 'olive KICK004_T', 5: 'olive KICK004_T', 6: 'olive KICK004_T', 7: 'olive KICK004_T', 8: 'olive KICK004_T' } },
  { n: 'HAt', c: 150, e: 72, me: 1, p: 52, f: 411, a: 1, clips: { 1: 'teal HIHAT011_', 2: 'teal HIHAT011_', 3: 'teal HIHAT011_', 4: 'sky HIHAT010_', 5: 'sky HIHAT010_', 6: 'sky HIHAT010_', 7: 'blue Groove Lo', 8: 'blue Groove Lo' }, play: 1 },
  { n: 'hat2', c: -150, e: -150, p: -4, f: 382, clips: { 3: 'sky FXSHOT00', 4: 'teal HIHAT011_', 5: 'teal HIHAT011_' } },
  { n: 'Bassline', c: -28, e: 73, p: 37, f: 411, a: 1, clips: { 6: 'blue SNTHBASS', 7: 'olive SYNTHPAD', 8: 'olive SYNTHPAD', 9: 'orange SYNTH009' } },
  { n: 'Synthbass', c: 75, e: -107, me: 1, p: 46, f: 390, b: 1, clips: { 3: 'yellow SNTHBASS', 4: 'orange ELECBASS', 5: 'tan kanToSBas', 6: 'tan kanToSBas', 7: 'tan kanToSBas' }, play: 7 },
  { n: 'Sequences', c: 150, e: 150, p: -55, mp: 1, f: 411, clips: { 3: 'gray GUITSHOT', 4: 'gray GUITSHOT', 5: 'gray GUITSHOT', 6: 'olive SYNTH046', 7: 'olive SYNTH046', 8: 'olive SYNTH046', 9: 'blue XTRASHOT' }, play: 9, alt: 5 },
  { n: 'Shot2', c: 95, e: 122, p: -50, mp: 1, f: 384, clips: { 3: 'orange GUITSHOT', 5: 'yellow EK0018', 7: 'plum SYNTH006', 9: 'red SYNTH005' } },
  { n: 'Shot/sfx', c: -150, mc: 1, e: 64, p: -150, f: 413, g: 1, clips: { 2: 'orange GUITSHOT', 3: 'orange GUITSHOT', 6: 'sky FX011C4', 7: 'red FX042' } },
  { n: 'Comp', ret: 1, c: -150, e: -150, p: 0, f: 377 },
  { n: 'EKo\\Verb', ret: 1, g: 1, c: -150, e: -150, p: 84, f: 377 },
  { n: 'Master', master: 1, p: 0, f: 387 }
];
const playTri = col => svg(10, 9, `<path d="M0 0L9 4.500 0 9z" fill="${col}"/>`);
const slot = (t, i) => {
  const lit = i === 1 ? ' lit' : '';
  if (t.master) return `<div class="slot scene${lit}">${playTri(DIM)}<span>${i}</span></div>`;
  if (t.ret) return `<div class="slot${lit}"></div>`;
  const c = t.clips[i];
  if (!c) return `<div class="slot${lit}"><i class="stop"></i></div>`;
  const k = c.indexOf(' '), on = t.play === i;
  return `<div class="slot${lit}"><div class="clip${on ? ' play' : ''}${t.alt === i ? ' alt' : ''}"><u>${playTri(on ? '#c4ff00' : DIM)}</u><span class="c-${c.slice(0, k)}">${c.slice(k + 1)}</span></div></div>`;
};
const statusArt = {
  Kick: '<rect x="16" y="1" width="50" height="13" fill="#879394"/><path d="M22.500 1V14" stroke="#111"/>',
  HAt: txt(27, 11, '1', 9.600, '#222') + '<circle cx="41" cy="7.500" r="6" fill="#00b99b" stroke="#6a6186"/>' + txt(57.500, 11, '4', 9.600, '#222'),
  hat2: '<path d="M22.500 1V14" stroke="#111"/>', Bassline: '<path d="M22.500 1V14" stroke="#111"/>',
  Synthbass: txt(23, 11, '1', 9.600, '#222') + '<circle cx="34.500" cy="7.500" r="6" fill="#cfb086" stroke="#6a6186"/><path d="M34.500 8V2" stroke="#6a6186"/>' + txt(53.500, 11, '22+', 9.600, '#ff416d', bold),
  Sequences: '<rect x="16.500" y="1.500" width="49" height="12" fill="#7784f2" stroke="#fbc52f"/>' + txt(41, 11, '0:1', 9.600, '#111', bold),
  Shot2: '<path d="M22.500 1V14" stroke="#111"/><rect x="57" y="1" width="9" height="13" fill="#a3640a"/>',
  'Shot/sfx': '<path d="M22.500 1V14" stroke="#111"/>', Comp: '', 'EKo\\Verb': '', Master: txt(42, 11, 'Stop Clips', 9.600, '#111', bold)
};
const status = t => `<div class="status">${svg(67, 15, (t.ret ? '' : `<rect x="3.500" y="3.500" width="8" height="8" fill="${DIM}" stroke="#a08a90" stroke-width=".600"/>`) + statusArt[t.n])}</div>`;
const sends = t => t.master
  ? `<div class="sendbox">${svg(69, 53, `<path d="M1 17.500H5M1 34.500H36" stroke="${DIM}"/><rect x="5.500" y="11.500" width="24" height="12" fill="#c4ff00" stroke="#6a6186"/><rect x="37.500" y="28.500" width="24" height="12" fill="${PINK}" stroke="#6a6186"/>` + txt(17.500, 21, 'Post', 9.600, '#111') + txt(49.500, 38, 'Pre', 9.600, '#111') + txt(50.500, 13, 'Sends', 9.300, '#111', bold))}</div>`
  : `<div class="sendbox">${svg(69, 53, lknob(17.500, 16.500, t.c, VIOLET) + lknob(49.500, 33.500, t.e, VIOLET) + (t.mc ? mark(4, 2) : '') + (t.me ? mark(36, 19) : '') + txt(17.500, 32, 'C', 9.300, '#111', bold) + txt(50, 49, 'E', 9.300, '#111', bold) + txt(50.500, 13, 'Sends', 9.300, '#111', bold))}</div>`;
const speaker = svg(7, 9, '<path d="M.600 3H2.600V6H.600zM2.600 3L5 .600V8.400L2.600 6" fill="none" stroke="#111" stroke-width="1.100"/><path d="M6.500 .500V8.500" stroke="#111" stroke-width=".800"/>');
const mic = svg(9, 11, '<rect x="2.800" y=".500" width="3.600" height="6" rx="1.800" fill="none" stroke="#111" stroke-width="1.300"/><path d="M1 4.500C1 9 8 9 8 4.500M4.500 8V11" fill="none" stroke="#111" stroke-width="1.200"/>');
const cross = svg(8, 8, '<path d="M2.500 1.200H5L6.800 3V5L5 6.800H2.500L1.200 5V3z" fill="none" stroke="#111" stroke-width="1.200"/><path d="M3.500 2.300v3.400l2-1.700z" fill="#111"/>');
const mix = t => {
  const pan = svg(28, 36, tri(12, 3) + lknob(12, 23.500, t.p, PINK, 1) + (t.mp ? mark(-2, 9) : ''));
  let left = pan + `<div class="pb lime">${speaker}</div><div class="pb">S</div>` + (t.ret ? '' : `<div class="pb">${mic}</div><div class="pb">${cross}</div>`);
  if (t.master) left = svg(28, 108, tri(11.500, 3, PINK) + lknob(11.500, 23.500, 0, PINK, 1) + '<rect x="-.500" y="57.500" width="23" height="12" fill="#c6f8ff" stroke="#6a6186"/>' + txt(11.500, 67, 'Solo', 9.600, '#222') + arc(11.500, 87.500, 12.600, -150, 150, '#00b99b') + '<path d="M11.500 87.500L17.500 98" stroke="#111" stroke-width="1.900"/><path d="M8 101v-2a3.500 3.500 0 0 1 7 0v2" fill="none" stroke="#111" stroke-width="1.500"/>');
  const y = t.f - 358, line = t.master ? '<rect x="8" y="10" width="12" height="2" fill="#879394"/><path d="M8 9.500h11" stroke="#cfd4d4" stroke-width=".500"/>' : '<path d="M8 18.500H19" stroke="#b9c0c0"/>';
  const m = svg(36, 108, `<path d="M8 3h5V105H8zM14 3h5V105h-5z" fill="#151515"/>${line}<path d="M20.500 ${y}l8.500-4.500v9z" fill="${DIM}" stroke="#6a6186"/>` + (t.ret || t.master ? '' : `<rect x="24" y="${y - 2.500}" width="5" height="5" fill="#e6005c"/>`));
  return `<div class="mix"><div class="l">${left}</div>${m}</div>`;
};
const ab = t => t.master
  ? `<div class="ab x">${svg(69, 19, '<path d="M7 4H32M35 4H61" stroke="#111" stroke-width="2"/><path d="M31 14l3.500-9 3.500 9z" fill="#6a6186"/><rect x="32" y="9" width="5" height="5" fill="#e6005c"/>')}</div>`
  : `<div class="ab"><div class="pb${t.a ? ' lime' : ''}">A</div><div class="pb${t.b ? ' p' : ''}">B</div></div>`;
$('heads').innerHTML = tracks.map(t => `<span class="${t.sel ? 'sel' : ''} ${t.g ? 'g' : ''}" ${t.g ? 'style="width:69px;height:18px"' : ''}>${t.n}</span>`).join('');
$('tracks').innerHTML = tracks.map(t => `<div class="col${t.sel ? ' sel' : ''}${t.g ? ' gap' : ''}">${Array.from({ length: 12 }, (_, i) => slot(t, i + 1)).join('')}${status(t)}${sends(t)}${mix(t)}${ab(t)}</div>`).join('');
document.querySelectorAll('.col.gap').forEach(e => { e.style.marginRight = '4px'; });
document.querySelectorAll('.heads .g').forEach(e => { e.style.border = '0'; e.style.display = 'block'; e.style.background = '#879394'; });

const D = '#434b4c', P = '#65637e', S = '#b1c3ec', T = '#cfb086', G = '#b0ab95', O = '#a3640a';
const lanes = [
  [[1814, 1855, P], [1856, 1908, P], [1909, 2124, S]],
  [[1338, 1363, D], [1364, 1389, D], [1761, 1787, D], [2082, 2107, P], [2108, 2124, S]],
  [[1717, 1735, '#626667'], [1736, 2019, G]], [],
  [[1621, 1778, O], [1779, 2124, T]],
  [[1548, 1573, D], [1574, 1598, G], [1599, 1611, D], [1613, 1637, D], [1638, 1664, G], [1665, 1691, D], [1692, 1717, D], [1717, 2124, G]],
  [[1443, 1468, O], [1469, 1495, T], [1496, 1521, O], [1522, 1547, O], [1548, 2124, T]],
  [[1912, 1918, '#626667'], [1920, 1974, G]]
];
let ov = '';
lanes.forEach((segs, i) => {
  ov += `<rect y="${i * 3}" width="787" height="2" fill="#879394"/>`;
  segs.forEach(([a, b, c]) => {
    ov += `<rect x="${a - 1337}" y="${i * 3}" width="${b - a}" height="2" fill="${c}"/>`;
    for (let x = a + (i === 4 || i === 0 ? 52 : 26); x < b; x += (i === 4 || i === 0 ? 52.300 : 26.200)) ov += `<rect x="${x - 1337}" y="${i * 3}" width="1" height="2" fill="#879394"/>`;
  });
});
$('overview').innerHTML = svg(787, 23, ov + '<path d="M16.500 0V23" stroke="#000"/>');

const devs = ['Auto Filter', 'Chorus', 'Compressor I', 'Compressor II', 'EQ Three', 'EQ Four', 'Erosion', 'Filter Delay', 'Gate', 'Grain Delay', 'Ping Pong Delay', 'Redux', 'Resonators', 'Reverb', 'Simple Delay', 'Utility', 'Vinyl Distortion'];
$('devlist').innerHTML = devs.map(d => `<li class="${d === 'Utility' ? 'sel' : ''}">${svg(14, 12, '<use href="#device"/>')}${d}</li>`).join('');

const disc = s => svg(19, 19, `<circle cx="9.500" cy="9.500" r="9.500" fill="#5c5350"/>${s}`);
const folder = n => disc(`<path d="M3.500 5h4l1 1.500h7V14.500h-12z" fill="#1b1636"/><circle cx="9.500" cy="10.500" r="3.300" fill="#5c5350"/>` + txt(9.500, 12.800, n, 6.500, '#1b1636', bold));
const up = svg(9, 9, '<path d="M4.500 0L9 9H0z" fill="#1b1636"/>'), down = svg(9, 9, '<path d="M4.500 9L9 0H0z" fill="#1b1636"/>');
$('tools').innerHTML = `<div class="circles">${disc('<path d="M3 9.500L13.500 4V15z" fill="#1b1636"/>')}${disc('<g transform="translate(3 3)"><path d="M2.500 3.500A5.300 5.300 0 1 1 10 11M1 6.500H8M0 10.500H3M4 10.500H8M2 6.500Q4 3.500 8 4V8" fill="none" stroke="#c4ff00" stroke-width="1.800"/></g>')}${disc('<path d="M2 9.500H7M12 7H16M12 12H16" stroke="#1b1636" stroke-width="2"/><path d="M12.500 4.500V14.500H10L6 11V8L10 4.500z" fill="#1b1636"/>')}${folder(1)}${folder(2)}${folder(3)}</div><div class="scroll">${up}<i></i>${down}</div>`;
$('side').innerHTML = `<div class="two">${disc('<path d="M4 5.500H15M4 8.500H15M4 11.500H15M4 14.500H15" stroke="#1b1636" stroke-width="1.500"/>')}${disc('<path d="M5 4V15M8 4V15M11 4V15M14 4V15" stroke="#c4ff00" stroke-width="1.900"/>')}</div><div class="sc">${up}<i></i>${down}</div>`;

/* ---------- device chain: each column stacks its controls by their top edge ---------- */
const stack = (w, items) => {
  let bottom = 526;
  return `<div class="stack" style="width:${w}px">${items.map(([y, h, html]) => { const m = y - bottom; bottom = y + h; return `<div style="margin-top:${m}px;height:${h}px">${html}</div>`; }).join('')}</div>`;
};
const T1 = (cy, s, b) => [cy - 6, 12, `<div class="t${b ? ' b' : ''}">${s}</div>`];
const K = (cy, v, bi, hot) => [cy - 21, 34, svg(28, 34, (bi ? tri(14, 1, hot ? PINK : DIM) : '') + lknob(14, 21, v, PINK, bi))];
const B = (y, w, s, k = '') => [y, 13, `<div class="pb ${k}" style="width:${w}px;height:13px">${s}</div>`];
const shape = d => svg(16, 9, `<path d="${d}" fill="none" stroke="#111" stroke-width="1.300"/>`);
const digit = y => B(y, 28, `0${svg(6, 7, `<path d="M6 0V7L0 3.500z" fill="${PINK}"/>`)}`, 'w');
const power = svg(13, 13, '<circle cx="6.500" cy="6.500" r="5.500" fill="#927380" stroke="#c4ff00" stroke-width="1.800"/><circle cx="6.500" cy="6.500" r="3" fill="none" stroke="#c4ff00" stroke-width="1"/><path d="M6.500 4V9" stroke="#c4ff00" stroke-width="1.200"/>');
const tools2 = svg(13, 13, '<circle cx="6.500" cy="6.500" r="6.500" fill="#927380"/><path d="M3 5.500H10L6.500 9z" fill="#111"/>') + svg(13, 13, '<circle cx="6.500" cy="6.500" r="6.500" fill="#927380"/><path d="M2.500 2.500h8v8h-8z" fill="#111"/><path d="M4.500 3h4v3h-4z" fill="#927380"/>');
const dev = (w, n, body) => `<div class="dev ${w}"><header>${power}<span>${n}</span>${tools2}</header><div class="body">${body}</div></div>`;
const meter2 = (ay) => svg(32, 86, `<path d="M10 0h5V86h-5zM16 0h5V86h-5z" fill="#151515"/><path d="M10 12.500H21" stroke="#b9c0c0"/><path d="M22.500 ${ay}l8.500-4.500v9z" fill="${DIM}" stroke="#6a6186"/>`);
let gr = '<rect x="8" y="0" width="11" height="88" fill="#151515"/>';
[['-1', 6], ['-3', 22], ['-6', 33], ['-10', 46], ['-14', 59], ['-20', 71], ['-36', 83]].forEach(([t, y]) => gr += `<text x="22" y="${y + 3.500}" font-size="9.300" font-weight="700" font-family="Liberation Sans" fill="#111">${t}</text>`);
const comp = stack(43, [T1(535, 'Ratio'), K(554, -90), T1(571.5, '2.00'), T1(586, 'Thresh'), [593, 86, meter2(66.5)], T1(685.5, '-22.0 dB')])
  + stack(43, [T1(535, 'Attack'), K(554, -70), T1(571.5, '1.69 ms'), T1(586, 'G R'), [592, 88, svg(28, 88, gr)]])
  + stack(43, [T1(535, 'Release'), K(554, -110), T1(571.5, '5.06 ms'), T1(586, 'Out'), [593, 86, meter2(36.5)], T1(685.5, '2.75 dB')])
  + stack(70, [T1(535, 'Look Ahead'), B(543, 28, '0 ms'), B(559, 28, '1 ms'), B(575, 28, '10 ms', 'lime'), T1(629, 'Mode'), B(637, 28, 'Peak', 'p'),
    [678, 13, `<div class="pair" style="transform:translateX(32px)"><div class="pb" style="width:29px;height:13px">${shape('M0 4.500H3L6 1H10L13 4.500L10 8H6L3 4.500M13 4.500H16')}</div><div class="pb lime" style="width:29px;height:13px">${shape('M0 1H4L8 4.500L4 8H0M8 4.500H16')}</div><div class="pb" style="width:29px;height:13px">${shape('M0 4.500H5L9 1H16M5 4.500L9 8H16')}</div></div>`]])
  + stack(56, [T1(535, 'Side Chain'), B(543, 28, 'EQ', 'p'), T1(566, 'Gain'), K(593.5, 0, 1, 1), T1(610.5, '0.00 dB'), T1(629, 'Freq'), K(648, -78), T1(665.5, '106 Hz')]);
const res = (w, n, lab, v, val, hot) => stack(w, [T1(535.5, `<span style="margin-right:${n.length > 1 ? 34 : 36}px">${n}</span>`, 1), B(543, 23, 'On', 'lime'), T1(565, lab), K(590, v, 1, hot), T1(607.5, val), digit(621), T1(649, 'Gain'), K(668, 103), T1(685.5, '0.00 dB')]);
const rule = '<i class="rule"></i>';
const reso = stack(57, [T1(535.5, '<span style="margin-right:23px">Filter</span>', 1), B(543, 23, 'On', 'lime'), T1(570.5, 'Frequency'), K(589, -120), T1(606.5, '81.1 Hz'), B(629, 23, shape('M1 2.500H11Q14 2.500 14 8')), B(645, 23, shape('M1 8Q1 3 5 3H15'), 'lime'), B(661, 23, shape('M1 8V5Q1 2 4 2H12Q15 2 15 5V8')), B(677, 23, shape('M0 1H2Q4 8 6 8H10Q12 8 14 1H16'))]) + rule
  + stack(45, [T1(535.5, '<span style="margin-right:12px">Mode</span>', 1), B(543, 23, 'A', 'lime'), T1(570.5, 'Decay'), K(589, 62), T1(606.5, '69.0'), B(621, 31, 'Const', 'lime'), T1(649, 'Color'), K(668, 118), T1(685.5, '90.0')])
  + res(49, 'I', 'Note', -142, 'D-1') + rule + res(46, 'II', 'Pitch', -42, '-7 st') + res(45, 'III', 'Pitch', -66, '-10 st') + rule
  + res(45, 'IV', 'Pitch', 0, '0 st', 1) + res(49, 'V', 'Pitch', 0, '0 st', 1) + rule
  + stack(46, [T1(535, 'Width'), K(554, 150), T1(571.5, '100 %'), T1(589, 'Gain'), K(614.5, 68, 1), T1(631.5, '6.43 dB'), T1(649, 'Dry/Wet'), K(668, -87), T1(685.5, '21 %')]);
const led = [531, 9, svg(9, 9, `<circle cx="3" cy="4.500" r="4.500" fill="${DIM}"/>`)];
const eqc = (n, l, rest) => stack(44, [led, T1(553, n), K(572.5, 103), T1(589.5, '0.00 dB'), B(595, 28, l, 'lime'), ...rest]);
const eq = eqc('GainLow', 'L', [T1(649, 'FreqLow'), K(668, -46), T1(685.5, '250 Hz')]) + eqc('GainMid', 'M', [B(650, 28, '24'), B(666, 28, '48', 'lime')]) + eqc('GainHi', 'H', [T1(649, 'FreqHi'), K(668, 18), T1(685.5, '2.50 kHz')]);
const two = (y, w, a, b, k) => [y, 13, `<div class="pair">${[a, b].map(s => `<div class="pb" style="width:${w}px;height:13px;font-weight:${k}">${s}</div>`).join('')}</div>`];
const util = stack(85, [B(529, 37, 'Mute'), T1(549, 'Gain'), K(576, 0, 1, 1), T1(593.5, '0.00 dB'), two(604, 17, 'L', 'R', 700), T1(626, 'Width'), K(653, 0, 1, 1), T1(670.5, '100 %'), two(680, 28, 'Phz-L', 'Phz-R', 400)]);
$('chain').innerHTML = dev('w1', 'Compressor II', comp) + dev('w2', 'Resonators', reso) + dev('w3', 'EQ Three', eq) + dev('w4', 'Utility', util) + '<div class="blank"></div>';
```
